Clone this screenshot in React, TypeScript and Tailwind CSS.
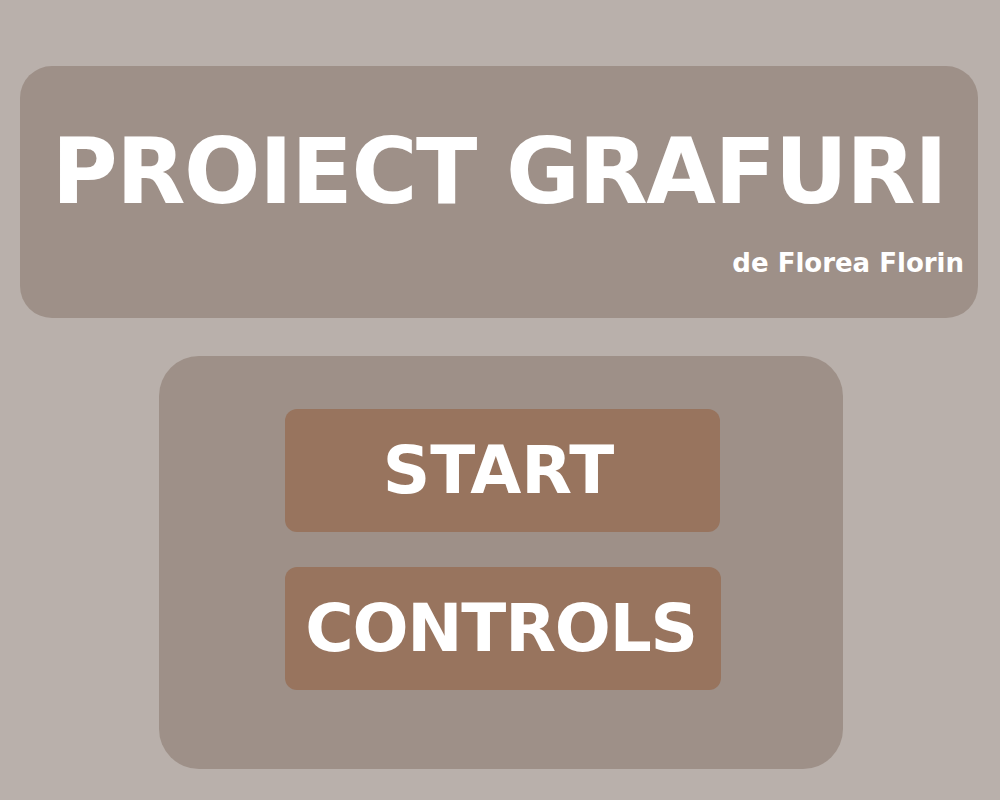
export default function App() {
  return (
    <div
      className="w-[1000px] h-[800px] bg-[#b9b0ab] overflow-hidden flex flex-col"
      style={{ fontFamily: '"DejaVu Sans", sans-serif' }}
    >
      {/* Title panel */}
      <div className="ml-[20px] mt-[66px] w-[958px] h-[252px] rounded-[32px] bg-[#9e9088] flex flex-col text-white font-bold">
        <h1 className="mt-[61px] text-center text-[90px] leading-none tracking-[-1.4px]">PROIECT GRAFURI</h1>
        <p className="mt-[33px] pr-[14px] text-right text-[26px] leading-none">de Florea Florin</p>
      </div>

      {/* Menu panel */}
      <div className="ml-[159px] mt-[38px] w-[684px] h-[413px] rounded-[40px] bg-[#9e9088] flex flex-col items-start pl-[126px] pt-[53px] gap-[35px]">
        <button className="w-[435px] h-[123px] pr-[8px] rounded-[12px] bg-[#98745e] text-white font-bold text-[66px] leading-none">
          START
        </button>
        <button className="w-[436px] h-[123px] pr-[4px] rounded-[12px] bg-[#98745e] text-white font-bold text-[66px] leading-none tracking-[-1.2px]">
          CONTROLS
        </button>
      </div>
    </div>
  );
}
